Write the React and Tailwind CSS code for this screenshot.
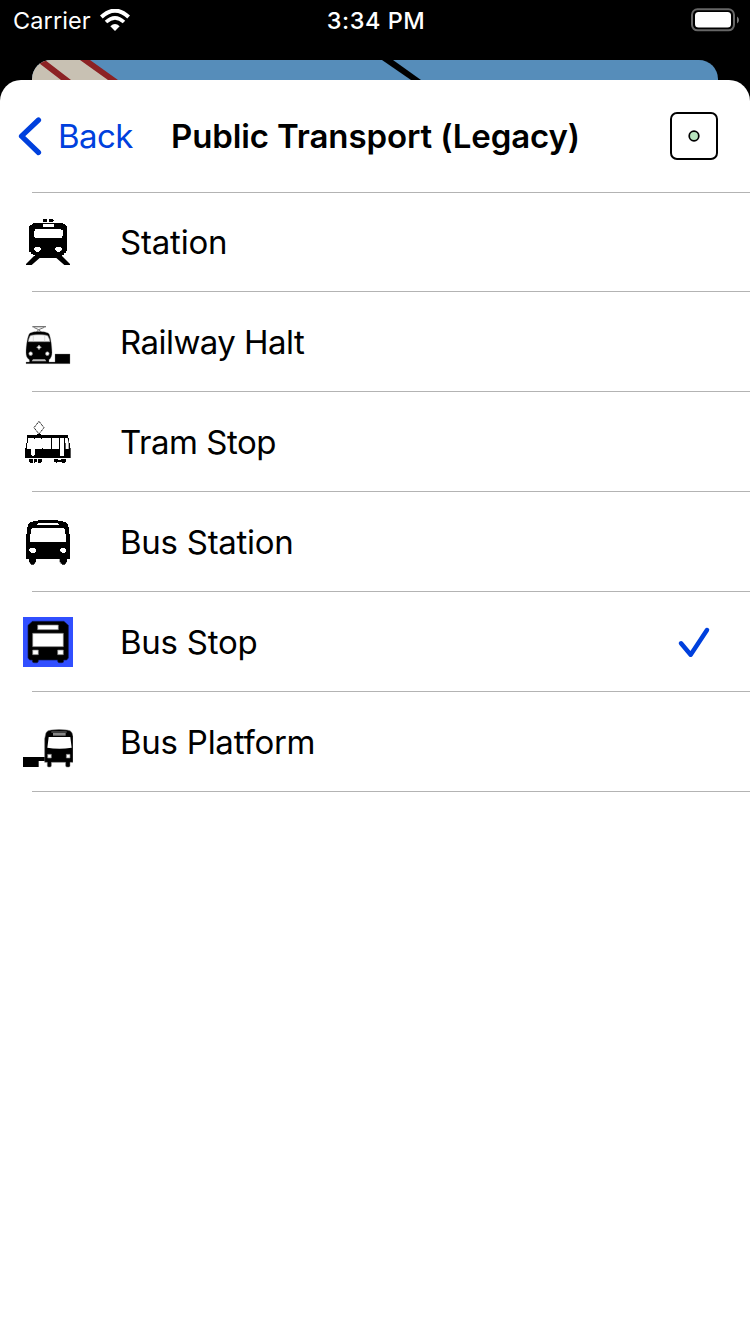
import React from "react";

const svgProps = { viewBox: "0 0 192 192", className: "block h-16 w-16 shrink-0" };

function StationIcon() {
  return (
    <svg {...svgProps}>
      <path d="M81 27h12v9H81zM99 27h12v3h3v3h-3v3H99z" />
      <path d="M51 39h90v3h6v3h3v3h3v75h-3v6h-6v6h-6v9H57v-9h-6v-3h-6v-6h-6V48h3v-3h6v-3h3z" />
      <path d="M54 138h17v6L47 165H30v-3zM138 138h-17v6l24 21h17v-3z" />
      <path fill="#fff" d="M81 42h33v9H81zM57 57h78v3h6v18h-3v6H57v-3h-3V63h3zM57 111h15v3h3v6h-3v3h-3v3h-9v-3h-3v-3h-3v-6h3zM120 111h15v3h3v7h-3v2h-3v3h-9v-3h-3v-3h-3v-6h3z" />
    </svg>
  );
}

function HaltIcon() {
  return (
    <svg {...svgProps}>
      <g fill="none" stroke="#777" strokeWidth="3">
        <path d="M49 50h41" strokeWidth="4" />
        <path d="M53 52l15 7 17-7M68 59l-7 8M68 59l9 8" />
      </g>
      <path d="M40 71c8-9 50-9 59 0 4 7 9 34 9 57 0 9-3 16-9 21v7h18v-24h45v29H30v-5h10v-7c-7-5-10-11-10-21 0-22 5-50 10-57z" stroke="#888" strokeWidth="1" />
      <path fill="#f8f8f8" stroke="#888" strokeWidth="2" d="M37 95c1-8 3-14 6-18 8-4 44-4 52 0 3 5 6 10 7 18z" />
      <path d="M52 75v19M86 75v19" stroke="#ccc" strokeWidth="2" />
      <path d="M51 148h36l4 6H47z" fill="#bbb" />
      <path d="M69 105l2.5 4.5 4.5 2.5-4.500 2.500-2.500 4.500-2.500-4.500-4.500-2.500 4.500-2.500z" fill="#fff" stroke="#aaa" strokeWidth="2" />
      <circle cx="44" cy="131" r="5.500" fill="#fff" stroke="#888" strokeWidth="2" />
      <circle cx="94" cy="131" r="5.500" fill="#fff" stroke="#888" strokeWidth="2" />
    </svg>
  );
}

function TramIcon() {
  return (
    <svg {...svgProps}>
      <path d="M69 34L54 53l15 19 15-19z" fill="none" stroke="#000" strokeWidth="3" strokeDasharray="4 2" />
      <path d="M63 72h12v4H63z" />
      <path d="M33 75h123v9h3v15h3v15h2v30H27v-30h3V99h3z" />
      <path fill="#fff" d="M36 84h69v33H81v-3h-3v3H57v18h-3v3h-6v-3h-3v-18H33V99h3zM108 84h21v33h-21zM132 84h12v54h-12zM147 84h8l3 15v18h-9v-18h-2z" />
      <path d="M54 84h3v3h-3zM75 84h3v3h-3z" />
      <path d="M39 147h12v12h-9v-3h-3zM54 147h9v9h-6v3h-3zM66 147h12v9h-3v3h-9zM114 147h12v9h-3v3h-3v-3h-6zM126 150h9v-3h15v9h-3v3h-9v-3h-12z" />
    </svg>
  );
}

function BusStationIcon() {
  return (
    <svg {...svgProps}>
      <path d="M66 30h60v3h15v3h9v3h3v3h3v9h3v21h3v75h-9v10h-3v4h-3v3h-9v-3h-4v-4h-3v-10H60v10h-3v4h-3v3h-9v-3h-3v-4h-3v-10h-9V72h3V51h3v-9h3v-3h3v-3h9v-3h15z" />
      <path fill="#fff" d="M66 39h60v3h3v3H63v-3h3zM48 54h96v3h3v15h3v24H42V72h3V57h3zM42 114h15v3h3v9h-3v3H45v-3h-3v-3h-3v-6h3zM135 114h12v3h3v9h-3v3h-9v-3h-4v-3h-2v-6h3z" />
    </svg>
  );
}

function BusStopIcon() {
  return (
    <svg {...svgProps}>
      <path fill="#314fff" d="M21 21h150v150H21z" />
      <path d="M49 34h95l6 6 7 6v98l-5 6h-9v3q0 5-5 5h-8q-5 0-5-5v-3H67v3q0 5-5 5h-8q-5 0-5-5v-3h-8l-5-6V46l7-6z" stroke="#101a55" strokeWidth="2" />
      <g fill="#fff" stroke="#777" strokeWidth="2">
        <path d="M65 45h62v14H65zM50 70h92v40H50zM50 120h17v14H50zM125 120h17v14h-17z" />
      </g>
    </svg>
  );
}

function PlatformIcon() {
  return (
    <svg {...svgProps}>
      <path d="M21 141h66v12H68v18H21z" />
      <path d="M90 68q4-7 16-8 23-3 47 0 11 1 15 8l3 11v78h-9v10q0 4-4 4h-5q-4 0-4-4v-10h-43v10q0 4-4 4h-4q-4 0-4-4v-10h-8V86z" stroke="#777" strokeWidth="1.5" />
      <path fill="#888" d="M111 69h38v8h-38z" />
      <path fill="#bbb" d="M106 65h46v2h-46z" />
      <path fill="#fff" d="M98 81h65l4 32q-20 3-36 3-22 0-37-3z" />
      <g fill="#fff" stroke="#777" strokeWidth="2">
        <path d="M95 133h11v11H95zM151 133h11v11h-11z" />
      </g>
      <path d="M171 21h21v171h-21z" fill="#fff" />
    </svg>
  );
}

const items = [
  { name: "Station", Icon: StationIcon, tracking: "tracking-[-0.2px]" },
  { name: "Railway Halt", Icon: HaltIcon, tracking: "tracking-[-0.55px]" },
  { name: "Tram Stop", Icon: TramIcon, tracking: "tracking-[-0.47px]" },
  { name: "Bus Station", Icon: BusStationIcon, tracking: "tracking-[-0.27px]" },
  { name: "Bus Stop", Icon: BusStopIcon, tracking: "tracking-[-0.25px]", selected: true },
  { name: "Bus Platform", Icon: PlatformIcon, tracking: "tracking-[-0.25px]" },
];

function StatusBar() {
  return (
    <div className="grid h-[41px] grid-cols-3 items-center pr-[11px] pl-[13px] text-white">
      <div className="flex items-center gap-[9px]">
        <span className="text-[23.5px] leading-10 tracking-[0.1px]">Carrier</span>
        <svg viewBox="0 0 90 66" className="mb-px h-[22px] w-[30px]" fill="none" stroke="#fff">
          <path d="M4 24Q45-14 86 24" strokeWidth="12" />
          <path d="M18 39Q45 14 72 39" strokeWidth="11" />
          <path d="M31 52Q45 38 59 52L45 66z" fill="#fff" stroke="none" />
        </svg>
      </div>
      <span className="text-center text-[23.5px] leading-10 font-medium tracking-[0.55px]">3:34 PM</span>
      <svg viewBox="0 0 48 24" className="mb-px h-6 w-12 justify-self-end">
        <rect x="1" y="1.3" width="42" height="21" rx="5.5" fill="none" stroke="#666" strokeWidth="2" />
        <rect x="4" y="4" width="36" height="15.5" rx="3.5" fill="#fff" />
        <path d="M46 8.5q2 1 2 3.5t-2 3.5z" fill="#777" />
      </svg>
    </div>
  );
}

export default function App() {
  return (
    <div className="flex h-[1334px] w-[750px] flex-col overflow-hidden bg-black font-['Inter','Liberation_Sans',sans-serif]">
      <StatusBar />
      <div className="mt-[19px] ml-8 h-5 w-[686px] shrink-0 overflow-hidden rounded-t-[19px] bg-[#568dba]">
        <svg viewBox="0 0 686 20" className="block h-5 w-[686px]">
          <path d="M0 0h54l27 20H0z" fill="#c8c1b3" />
          <path d="M48 0h10l28 20H76zM3 0h10l26 20H29z" fill="#8c2224" />
          <path d="M350 0h11l28 20H379z" fill="#000" />
        </svg>
      </div>
      <main className="flex-1 rounded-t-[21px] bg-white text-black">
        <header className="flex h-28 items-center pl-[18px] pr-8">
          <svg viewBox="0 0 24 40" className="h-10 w-6" fill="none" stroke="#0040dd" strokeWidth="5.2" strokeLinecap="round" strokeLinejoin="round">
            <path d="M20.500 4L3.500 20.200 20.500 36.500" />
          </svg>
          <span className="ml-4 w-[113px] text-[33px] leading-10 tracking-[-0.6px] text-[#0040dd]">Back</span>
          <h1 className="flex-1 text-[33px] leading-10 font-semibold tracking-[-0.12px] whitespace-nowrap">Public Transport (Legacy)</h1>
          <svg viewBox="0 0 48 48" className="h-12 w-12" stroke="#000" strokeWidth="2">
            <rect x="1" y="1" width="46" height="46" rx="6" fill="#fff" />
            <circle cx="24" cy="24" r="4.8" fill="#b7e4bd" strokeWidth="1.7" />
          </svg>
        </header>
        <div className="ml-8 h-px bg-[#b3b3b3]" />
        <ul>
          {items.map(({ name, Icon, tracking, selected }) => (
            <li key={name} className="h-[100px] first:h-[99px]">
              <div className="flex h-[calc(100%-1px)] items-center pl-4">
                <Icon />
                <span className={`ml-10 flex-1 text-[33px] leading-10 ${tracking}`}>{name}</span>
                {selected && (
                  <svg viewBox="0 0 192 192" className="mr-[26px] h-16 w-16" fill="none" stroke="#0040dd" strokeWidth="13.5" strokeLinecap="round" strokeLinejoin="round">
                    <path d="M63 100L92 134 141 60" />
                  </svg>
                )}
              </div>
              <div className="ml-8 h-px bg-[#b3b3b3]" />
            </li>
          ))}
        </ul>
      </main>
    </div>
  );
}
